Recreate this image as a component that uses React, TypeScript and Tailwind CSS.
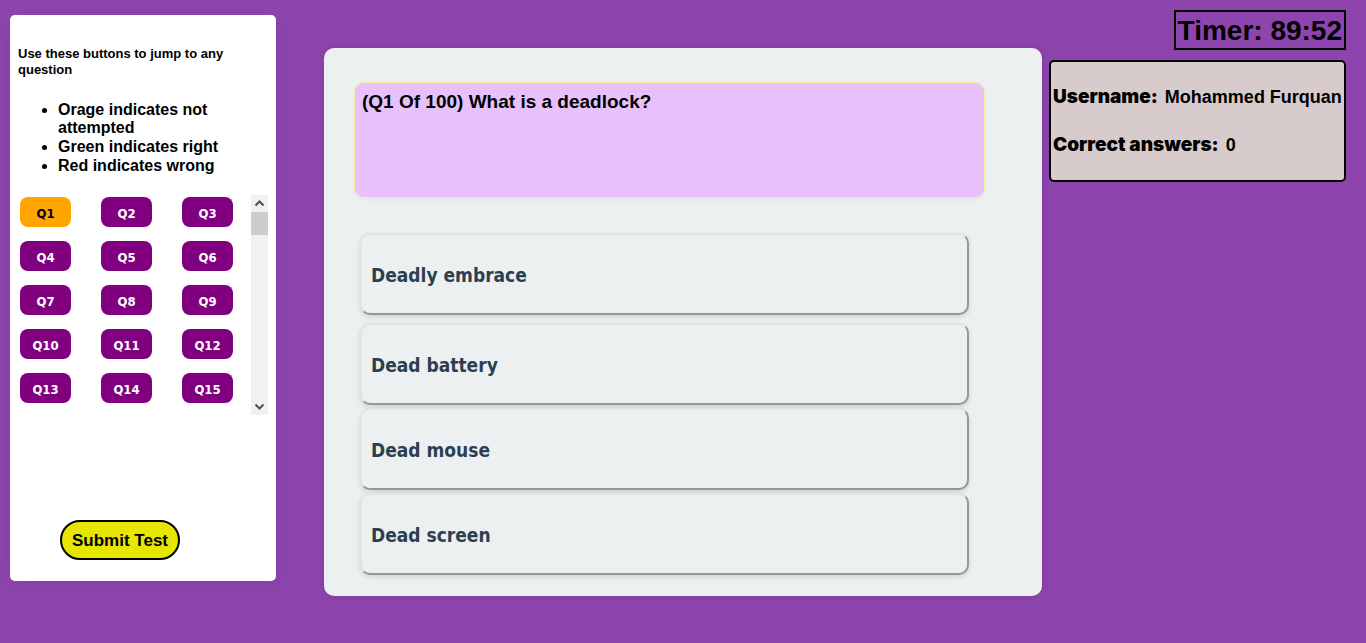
import { useState } from "react";

const questionCount = 100;
const perRow = 3;
const visibleRows = 5;
const lastFirstRow = Math.ceil(questionCount / perRow) - visibleRows;
const options = ["Deadly embrace", "Dead battery", "Dead mouse", "Dead screen"];

function Chevron({ down = false }: { down?: boolean }) {
  return (
    <svg viewBox="0 0 17 17" className="h-[17px] w-[17px]" aria-hidden="true">
      <path
        d={down ? "M4.5 6.5 L8.5 10.5 L12.5 6.5" : "M4.5 10.5 L8.5 6.5 L12.5 10.5"}
        fill="none"
        stroke="#505050"
        strokeWidth="2"
      />
    </svg>
  );
}

function QuestionNav({ current, onJump }: { current: number; onJump: (n: number) => void }) {
  const [firstRow, setFirstRow] = useState(0);

  const move = (rows: number) =>
    setFirstRow((row) => Math.min(lastFirstRow, Math.max(0, row + rows)));

  const start = firstRow * perRow + 1;
  const shown = Array.from({ length: perRow * visibleRows }, (_, i) => start + i).filter(
    (n) => n <= questionCount,
  );

  return (
    <div
      className="flex h-[220px] items-stretch justify-between"
      onWheel={(e) => move(e.deltaY > 0 ? 1 : -1)}
    >
      <div className="grid auto-rows-[30px] grid-cols-[51px_51px_51px] gap-x-[30px] gap-y-[14px] py-0.5 pl-0.5">
        {shown.map((n) => (
          <button
            key={n}
            type="button"
            onClick={() => onJump(n)}
            className={
              n === current
                ? "rounded-lg bg-[#ffa500] pt-1 font-['DejaVu_Sans_Condensed','DejaVu_Sans',sans-serif] text-[13px] leading-4 font-bold text-black"
                : "rounded-lg bg-[#800080] pt-1 font-['DejaVu_Sans_Condensed','DejaVu_Sans',sans-serif] text-[13px] leading-4 font-bold text-white"
            }
          >
            Q{n}
          </button>
        ))}
      </div>
      <div className="flex w-[17px] flex-col bg-[#f1f1f1]">
        <button type="button" aria-label="Scroll up" onClick={() => move(-1)}>
          <Chevron />
        </button>
        <div className="flex-1">
          <div
            className="h-[23px] bg-[#cdcdcd]"
            style={{ transform: `translateY(${Math.round((firstRow / lastFirstRow) * 163)}px)` }}
          />
        </div>
        <button type="button" aria-label="Scroll down" onClick={() => move(1)}>
          <Chevron down />
        </button>
      </div>
    </div>
  );
}

export default function App() {
  const [current, setCurrent] = useState(1);

  return (
    <div className="flex min-h-screen items-start bg-[#8e44ad] pr-5 pl-2.5 font-['Liberation_Sans',Arial,sans-serif] text-black">
      <aside className="mt-[15px] w-[266px] shrink-0 rounded-[5px] bg-white px-2 pt-[31px] pb-[21px] shadow-[0_4px_20px_rgba(0,0,0,0.08)]">
        <h2 className="text-[13px] leading-4 font-bold">Use these buttons to jump to any question</h2>
        <ul className="mt-[23px] mb-5 list-disc pl-10 text-base leading-[19px] font-bold">
          <li className="leading-[18px]">Orage indicates not attempted</li>
          <li>Green indicates right</li>
          <li>Red indicates wrong</li>
        </ul>
        <QuestionNav current={current} onJump={setCurrent} />
        <button
          type="button"
          className="mt-[105px] ml-[42px] block h-10 w-[120px] rounded-[20px] border-2 border-black bg-[#e6e600] pt-0.5 text-[17px] leading-6 font-bold whitespace-nowrap"
        >
          Submit Test
        </button>
      </aside>

      <main className="mt-12 mr-[7px] ml-12 flex-1 rounded-[10px] bg-[#ecf0f1] pt-[34px] pr-[57px] pb-[21px] pl-[30px] shadow-[0_0_10px_rgba(0,0,0,0.12)]">
        <h1 className="h-[116px] rounded-[10px] border border-[#f5eeaa] bg-[#e6c1fc] px-[7px] pt-2 text-[19px] leading-[22px] font-bold shadow-[0_2px_4px_rgba(0,0,0,0.04)]">
          (Q{current} Of {questionCount}) What is a deadlock?
        </h1>
        <div className="mt-[35px] mr-4 ml-1.5 flex flex-col gap-[3px]">
          {options.map((option) => (
            <button
              key={option}
              type="button"
              className="h-[82px] rounded-[10px] border-2 border-t-[#e3e2e4] border-r-[#979698] border-b-[#979698] border-l-[#e3e2e4] bg-[#ecf0f1] px-[9px] pt-0.5 text-left font-['DejaVu_Sans_Condensed','DejaVu_Sans',sans-serif] text-[19px] leading-6 font-bold text-[#2c3e50] shadow-[0_2px_5px_rgba(0,0,0,0.12)] first:mb-[5px]"
            >
              {option}
            </button>
          ))}
        </div>
      </main>

      <section className="flex w-[297px] shrink-0 flex-col items-end gap-2.5 pt-2.5">
        <div className="flex h-10 items-center border-2 border-black px-0.5 pt-0.5 text-[28px] font-bold whitespace-nowrap">
          Timer: 89:52
        </div>
        <div className="flex h-[122px] w-full flex-col gap-6 rounded-[5px] border-2 border-black bg-[#d7cccb] px-0.5 pt-[23px] text-[18px] leading-6 font-bold whitespace-nowrap">
          <p>
            <strong className="mr-0.5 font-['Inter',sans-serif] text-[19px] font-black">Username:</strong> Mohammed Furquan
          </p>
          <p>
            <strong className="mr-0.5 font-['Inter',sans-serif] text-[19px] font-black">Correct answers:</strong> 0
          </p>
        </div>
      </section>
    </div>
  );
}
